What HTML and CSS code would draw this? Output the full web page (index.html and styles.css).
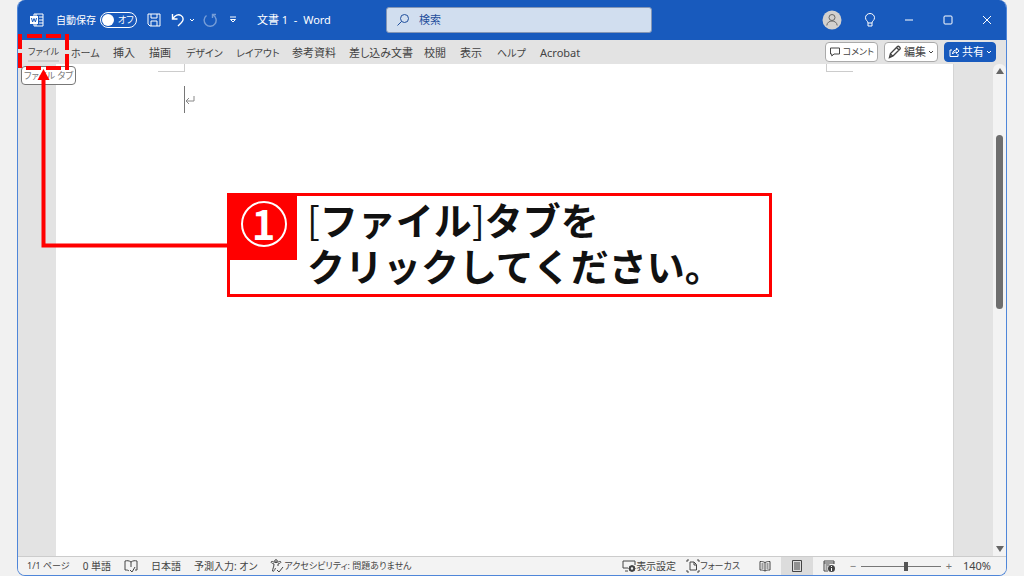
FILE: index.html
```html
<!DOCTYPE html>
<html lang="ja">
<head>
<meta charset="utf-8">
<title>文書 1 - Word</title>
<link rel="stylesheet" href="styles.css">
</head>
<body>
<div class="window">
  <header class="titlebar">
    <div class="quick">
      <svg class="icon word" viewBox="0 0 14 14"><path d="M4 3V1h9v12H4v-2M6 1v2M6 11v2M9 4h4M9 7h4M9 10h4"/><path class="solid" d="M0 3h8v8H0z"/><path class="mark" d="M1.5 5l1.1 4L4 5.5 5.4 9l1.1-4"/></svg>
      <label class="autosave" for="autosave">自動保存</label>
      <button class="toggle" id="autosave" type="button" role="switch" aria-checked="false"><span class="knob"></span>オフ</button>
      <button class="bare save" type="button" aria-label="上書き保存"><svg class="icon" viewBox="0 0 14 14"><path d="M1 1h12v12H3l-2-2zM4 1v4h6V1M4 13V8h6v5"/></svg></button>
      <button class="bare undo" type="button" aria-label="元に戻す"><svg class="icon" viewBox="0 0 14 14"><path class="bold" d="M1.5 1v5h5M1.8 5.8C4 2 7.500 1 10 2.500c3 2 2.500 5 .5 7L7 13"/></svg></button>
      <button class="bare" type="button" aria-label="元に戻すの一覧"><svg class="chevron" viewBox="0 0 6 6"><path d="M1 2l2 2 2-2"/></svg></button>
      <button class="bare redo" type="button" aria-label="繰り返し"><svg class="icon" viewBox="0 0 14 14"><path class="bold" d="M9.500 5V1.500H13M10 2a6 6 0 1 1-6.500.500"/></svg></button>
      <button class="bare custom" type="button" aria-label="カスタマイズ"><svg class="small" viewBox="0 0 8 8"><path d="M1 1h6M1.500 3.500h5L4 6z"/></svg></button>
      <h1 class="doc-name">文書 1&nbsp; -&nbsp; Word</h1>
    </div>
    <label class="search">
      <svg class="icon" viewBox="0 0 14 14"><circle cx="8.500" cy="5.500" r="4"/><path d="M5.600 8.400L1.500 12.500"/></svg>
      <input class="search-input" type="search" placeholder="検索" aria-label="検索">
    </label>
    <div class="system">
      <button class="bare" type="button" aria-label="アカウント"><svg class="avatar" viewBox="0 0 20 20"><circle class="face" cx="10" cy="10" r="9.500"/><circle cx="10" cy="7.500" r="3"/><path d="M4.800 15.500c.4-6 10-6 10.400 0"/></svg></button>
      <button class="bare" type="button" aria-label="ヒント"><svg class="icon" viewBox="0 0 14 14"><path d="M5 10C5 8 2.500 7.500 2.500 4.700a4.500 4.200 0 0 1 9 0C11.500 7.500 9 8 9 10zM5 10v3h4v-3"/></svg></button>
      <button class="bare" type="button" aria-label="最小化"><svg class="control" viewBox="0 0 10 10"><path d="M1 5h8"/></svg></button>
      <button class="bare" type="button" aria-label="最大化"><svg class="control" viewBox="0 0 10 10"><rect x="1" y="1" width="8" height="8" rx="1"/></svg></button>
      <button class="bare" type="button" aria-label="閉じる"><svg class="control" viewBox="0 0 10 10"><path d="M1 1l8 8M9 1L1 9"/></svg></button>
    </div>
  </header>

  <div class="ribbon">
    <nav class="tabs">
      <a class="tab compact current" href="#">ファイル</a>
      <a class="tab kana" href="#">ホーム</a>
      <a class="tab" href="#">挿入</a>
      <a class="tab" href="#">描画</a>
      <a class="tab kana" href="#">デザイン</a>
      <a class="tab kana" href="#">レイアウト</a>
      <a class="tab" href="#">参考資料</a>
      <a class="tab mixed" href="#">差し込み文書</a>
      <a class="tab" href="#">校閲</a>
      <a class="tab" href="#">表示</a>
      <a class="tab kana" href="#">ヘルプ</a>
      <a class="tab" href="#">Acrobat</a>
    </nav>
    <div class="actions">
      <button class="action compact" type="button"><svg class="glyph" viewBox="0 0 12 12"><path d="M1.500 2h9v6H5L2.800 10V8H1.500z"/></svg>コメント</button>
      <button class="action" type="button"><svg class="icon" viewBox="0 0 14 14"><path class="bold" d="M1.500 12.500l1-4 7-7c1-1 3.500 1.500 2.500 2.500l-7 7zM8.500 2.500L11 5M2.500 9l2 2"/></svg>編集<svg class="chevron" viewBox="0 0 6 6"><path d="M1 2l2 2 2-2"/></svg></button>
      <button class="action primary" type="button"><svg class="glyph" viewBox="0 0 12 12"><path d="M4 4H2v6.500h8V8M4.500 8c.3-3 2-4 4-4V2L11 5 8.500 7.500V6c-2 0-3 .5-4 2z"/></svg>共有<svg class="chevron" viewBox="0 0 6 6"><path d="M1 2l2 2 2-2"/></svg></button>
    </div>
  </div>

  <main class="workspace">
    <article class="page">
      <span class="corner left"></span>
      <span class="corner right"></span>
      <div class="caret"><svg class="return" viewBox="0 0 10 10"><path d="M9 1v5H1M4 3L1 6l3 3"/></svg></div>
    </article>
    <div class="scrollbar">
      <svg class="arrow" viewBox="0 0 8 6"><path d="M4 0l4 6H0z"/></svg>
      <span class="thumb"></span>
      <svg class="arrow" viewBox="0 0 8 6"><path d="M4 6l4-6H0z"/></svg>
    </div>
  </main>

  <footer class="status">
    <div class="status-left">
      <span class="compact">1/1 ページ</span>
      <span class="kana">0 単語</span>
      <svg class="icon" viewBox="0 0 14 14"><path d="M7 3C5 1.500 3 1.500 1 2v9c2 0 3 0 4 1M7 3c2-1.500 4-1.500 6-1v9h-2M7 3v5M6 11l2 2 3-5"/></svg>
      <span class="kana">日本語</span>
      <span class="kana">予測入力: オン</span>
      <span class="pair compact"><svg class="icon" viewBox="0 0 14 14"><circle cx="6" cy="2" r="1.300"/><path d="M6 3.500C4 3.500 2.500 2 1.500 2.500s-.5 1.500 2.500 2.500c0 3-1.500 5-1.500 7 1 1 2-.5 3-3M6 3.500c2 0 3.500-1.500 4.500-1s.5 1.500-2.500 2.500v2M7 11l2 2 4-5"/></svg>アクセシビリティ: 問題ありません</span>
    </div>
    <div class="status-right">
      <span class="pair kana"><svg class="icon" viewBox="0 0 14 14"><path d="M6 9H1V2h12v4M3 12h3"/><circle class="gear" cx="10" cy="9.500" r="2.200"/><path d="M10 6v1M10 12v1M6.500 9.500h1M12.500 9.500h1M7.600 7l.7.800M11.700 11.200l.7.800M12.400 7l-.7.800M8.300 11.200l-.7.800"/></svg>表示設定</span>
      <span class="pair compact focus"><svg class="icon" viewBox="0 0 14 14"><path d="M3 1H1v2M11 1h2v2M1 11v2h2M13 11v2h-2M4 3h4l2.500 2.500V11H4zM8 3v3h2"/></svg>フォーカス</span>
      <button class="view" type="button" aria-label="閲覧モード"><svg class="glyph" viewBox="0 0 12 12"><path d="M6 2.500C4 1.500 3 1.500 1 1.500V10c2 0 3 0 5 1 2-1 3-1 5-1V1.500c-2 0-3 0-5 1zV11M2.500 4h2M2.500 6h2M2.500 8h2M7.500 4h2M7.500 6h2M7.500 8h2"/></svg></button>
      <button class="view active" type="button" aria-label="印刷レイアウト"><svg class="glyph" viewBox="0 0 12 12"><path d="M1.500.5h9v11h-9zM3 3h6M3 5h6M3 7h6M3 9h6"/></svg></button>
      <button class="view" type="button" aria-label="Web レイアウト"><svg class="glyph" viewBox="0 0 12 12"><path d="M5 11H1V1h10v3M1 3h10M2.500 5h4M2.500 7h2M2.500 9h2"/><circle class="dot" cx="8.500" cy="8.500" r="3.500"/><path class="cut" d="M8.500 6v1M8.500 8v3"/></svg></button>
      <button class="zoom-step" type="button" aria-label="縮小">−</button>
      <input class="zoom" type="range" min="0" max="100" value="56" aria-label="ズーム">
      <button class="zoom-step" type="button" aria-label="拡大">+</button>
      <span class="percent">140%</span>
    </div>
  </footer>
</div>

<div class="tooltip compact">ファイル タブ</div>
<svg class="pointer" viewBox="0 0 230 250"><path class="dash" d="M18 36h4M27 36h15M46 36h15M65 36h4M20 34v15M20 53v15M67 34v16M67 54v16M26 68h15M46 68h15"/><path class="line" d="M43.500 77v168.500H229"/><path class="head" d="M43.500 69l6 11h-12z"/></svg>
<section class="callout">
  <div class="step"><span class="number">1</span></div>
  <p class="message"><span class="thin">[</span>ファイル<span class="thin">]</span>タブを<br>クリックしてください。</p>
</section>
</body>
</html>
```
FILE: styles.css
```css
* { box-sizing: border-box; }

body {
  margin: 0;
  background: #f1f1f1;
  color: #444;
  font: 11px/16px "Noto Sans", "Noto Sans CJK JP", sans-serif;
  white-space: nowrap;
}

button, input { font: inherit; color: inherit; }
button { padding: 0; border: 0; background: none; }
svg { display: block; flex: none; fill: none; stroke: currentColor; stroke-width: 1; }

.kana { font-size: 10px; font-feature-settings: "palt"; }
.compact { font-size: 9px; font-feature-settings: "palt"; }
.mixed { font-feature-settings: "palt"; }
.icon { width: 14px; height: 14px; }
.glyph { width: 12px; height: 12px; }
.chevron { width: 6px; height: 6px; }
.small { width: 8px; height: 8px; }
.control { width: 10px; height: 10px; }
.bold { stroke-width: 1.400; }

.window {
  display: grid;
  grid-template-rows: 40px 24px 1fr 19px;
  height: 100vh;
  margin: 0 17px;
  border: 1px solid #4f86d9;
  border-top: 0;
  border-radius: 8px;
  overflow: hidden;
  background: #e3e3e3;
}

/* Title bar */
.titlebar {
  display: flex;
  align-items: center;
  background: #185abd;
  color: #fff;
}
.quick { display: flex; align-items: center; width: 368px; padding-left: 12px; }
.word .solid { fill: #fff; stroke: none; }
.word .mark { stroke: #185abd; }
.autosave { width: 44px; margin-left: 12px; font-size: 10px; }
.toggle {
  display: flex;
  align-items: center;
  gap: 4px;
  width: 37px;
  height: 16px;
  padding: 0 1px;
  border: 1px solid #fff;
  border-radius: 8px;
  font-size: 9px;
  line-height: 14px;
  font-feature-settings: "palt";
}
.knob { flex: none; width: 12px; height: 12px; border-radius: 50%; background: #fff; }
.save, .undo { margin-left: 10px; }
.undo { margin-right: 4px; }
.redo { margin: 0 12px 0 8px; opacity: 0.4; }
.doc-name { margin: 0 0 0 20px; font-size: 11px; font-weight: 400; }
.search {
  display: flex;
  align-items: center;
  flex: 0 1 266px;
  gap: 9px;
  height: 26px;
  padding-left: 9px;
  border: 1px solid #8496b5;
  border-radius: 3px;
  background: #d1deef;
  color: #1f4e9c;
}
.search-input { flex: 1; min-width: 0; padding: 0; border: 0; outline: 0; background: none; }
.search-input::placeholder { color: #1f4e9c; }
.system { display: flex; align-items: center; margin-left: auto; padding-right: 14px; gap: 29px; }
.system .bare:nth-child(2) { margin: 0 -2px 0 -8px; }
.avatar { width: 20px; height: 20px; color: #666; }
.face { fill: #d2d0ce; stroke: none; }

/* Ribbon */
.ribbon { display: flex; align-items: center; justify-content: space-between; padding: 0 10px; }
.tabs {
  display: grid;
  grid-template-columns: 43px 42px 36px 37px 50px 56px 57px 75px 36px 37px 43px auto;
  align-items: center;
  padding-top: 1px;
}
.tab { color: inherit; text-decoration: none; }
.current { justify-self: start; border-bottom: 2px solid #ccc; }
.actions { display: flex; gap: 6px; }
.action {
  display: flex;
  align-items: center;
  justify-content: center;
  gap: 2px;
  height: 20px;
  padding: 0 3px;
  border: 1px solid #aaa;
  border-radius: 4px;
  background: #fff;
}
.primary { border-color: #185abd; background: #185abd; color: #fff; }

/* Document */
.workspace { display: flex; min-height: 0; padding-left: 38px; }
.page {
  flex: 1;
  position: relative;
  margin-right: 39px;
  padding: 22px 128px;
  border-right: 1px solid #d4d4d4;
  background: #fff;
}
.corner { position: absolute; top: 0; width: 27px; height: 8px; border-bottom: 1px solid #ccc; }
.left { left: 102px; border-right: 1px solid #ccc; }
.right { right: 100px; border-left: 1px solid #ccc; }
.caret { display: flex; align-items: center; height: 27px; border-left: 1px solid #777; color: #888; }
.return { width: 10px; height: 10px; }
.scrollbar {
  display: flex;
  flex-direction: column;
  align-items: center;
  width: 13px;
  padding: 4px 0;
  border-radius: 6px 6px 0 0;
  background: #f3f3f3;
}
.arrow { width: 8px; height: 6px; fill: #666; stroke: none; }
.thumb { width: 7px; height: 36%; margin: 61px 0 auto; border-radius: 4px; background: #6e6e6e; }

/* Status bar */
.status {
  display: flex;
  align-items: center;
  justify-content: space-between;
  padding: 0 15px 0 9px;
  border-top: 1px solid #ccc;
  background: #f3f3f3;
}
.status-left { display: flex; align-items: center; gap: 13px; }
.status-right { display: flex; align-items: center; }
.pair { display: flex; align-items: center; }
.focus { margin: 0 9px 0 10px; }
.view { display: flex; align-items: center; justify-content: center; width: 32px; height: 18px; }
.active { background: #dcdcdc; }
.gear { stroke-width: 2; }
.dot { fill: #444; stroke: none; }
.cut { stroke: #fff; }
.zoom-step { width: 8px; color: #777; }
.view + .zoom-step { margin-left: 4px; }
.zoom {
  width: 80px;
  height: 10px;
  margin: 0 4px;
  appearance: none;
  background: linear-gradient(#777, #777) center / 100% 1px no-repeat;
}
.zoom::-webkit-slider-thumb { appearance: none; width: 4px; height: 9px; background: #555; }
.percent { margin-left: 10px; }

/* Guide overlay */
.tooltip {
  position: absolute;
  left: 21px;
  top: 66px;
  padding: 0 2px;
  border: 1px solid #777;
  border-radius: 4px;
  background: #fff;
  color: #777;
  line-height: 17px;
}
.pointer { position: absolute; left: 0; top: 0; width: 230px; height: 250px; pointer-events: none; }
.dash, .line { stroke: #f00; stroke-width: 4; }
.head { fill: #f00; stroke: none; }
.callout {
  position: absolute;
  left: 227px;
  top: 193px;
  display: flex;
  align-items: flex-start;
  gap: 10px;
  width: 545px;
  padding-bottom: 6px;
  border: 3px solid #f00;
  background: #fff;
  color: #111;
  font-family: "Noto Sans CJK JP", sans-serif;
}
.step {
  display: flex;
  justify-content: center;
  width: 67px;
  height: 64px;
  padding-top: 5px;
  background: #f00;
  color: #fff;
}
.number {
  width: 46px;
  height: 46px;
  border: 2px solid #fff;
  border-radius: 50%;
  font-size: 40px;
  font-weight: 700;
  line-height: 40px;
  text-align: center;
}
.message { margin: 0; font-size: 38px; font-weight: 700; line-height: 46px; }
.thin { font-weight: 400; }
```
